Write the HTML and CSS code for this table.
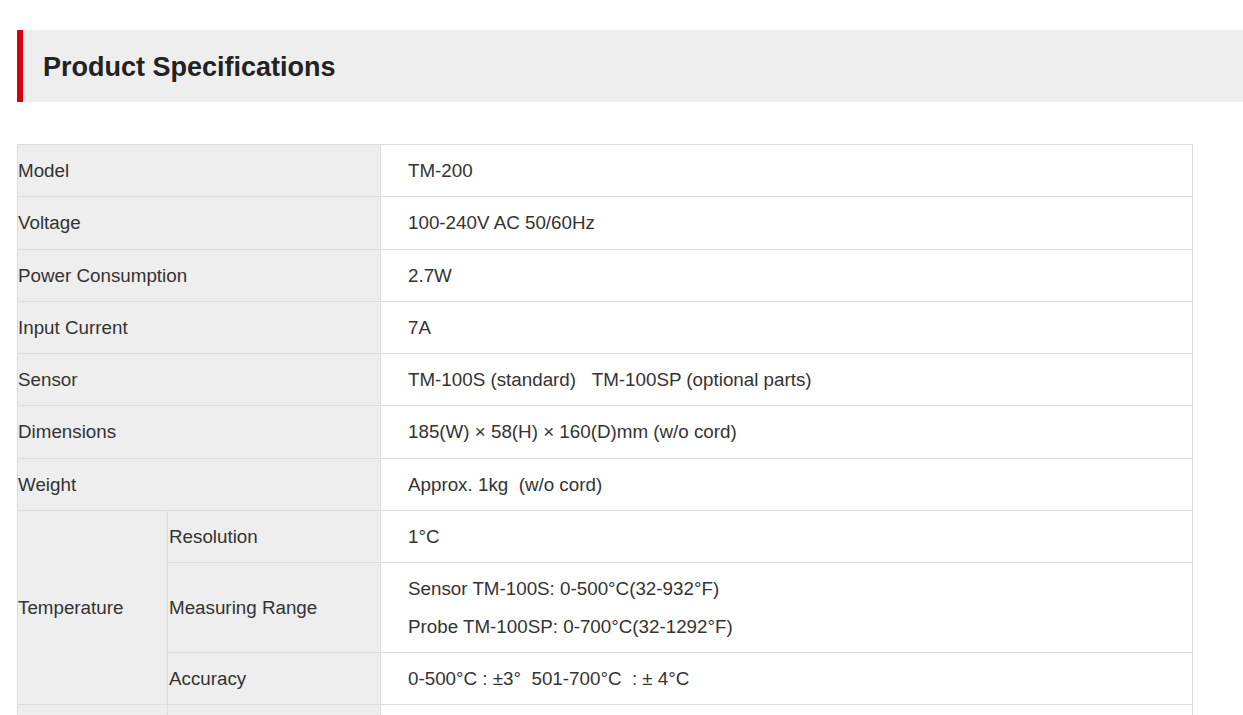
FILE: index.html
```html
<!DOCTYPE html>
<html lang="en">
<head>
<meta charset="utf-8">
<title>Product Specifications</title>
<link rel="stylesheet" href="styles.css">
</head>
<body>
<section class="spec">
  <h2 class="spec-title">Product Specifications</h2>
  <table class="spec-table">
    <colgroup>
      <col class="c1">
      <col class="c2">
      <col class="c3">
    </colgroup>
    <tbody>
      <tr><th colspan="2">Model</th><td>TM-200</td></tr>
      <tr><th colspan="2">Voltage</th><td>100-240V AC 50/60Hz</td></tr>
      <tr><th colspan="2">Power Consumption</th><td>2.7W</td></tr>
      <tr><th colspan="2">Input Current</th><td>7A</td></tr>
      <tr><th colspan="2">Sensor</th><td>TM-100S (standard)&nbsp;&nbsp;&nbsp;TM-100SP (optional parts)</td></tr>
      <tr><th colspan="2">Dimensions</th><td>185(W) × 58(H) × 160(D)mm (w/o cord)</td></tr>
      <tr><th colspan="2">Weight</th><td>Approx. 1kg&nbsp;&nbsp;(w/o cord)</td></tr>
      <tr><th rowspan="3">Temperature</th><th class="sub">Resolution</th><td>1°C</td></tr>
      <tr><th class="sub">Measuring Range</th><td>Sensor TM-100S: 0-500°C(32-932°F)<br>Probe TM-100SP: 0-700°C(32-1292°F)</td></tr>
      <tr><th class="sub">Accuracy</th><td>0-500°C : ±3°&nbsp;&nbsp;501-700°C&nbsp;&nbsp;: ± 4°C</td></tr>
      <tr><th rowspan="2">Timer</th><th class="sub">Setting Range</th><td>1-99 min</td></tr>
      <tr><th class="sub">Accuracy</th><td>±1 min</td></tr>
    </tbody>
  </table>
</section>
</body>
</html>
```

FILE: styles.css
```css
html, body {
  margin: 0;
  padding: 0;
  background: #fff;
}

body {
  font-family: "Liberation Sans", Arial, sans-serif;
  color: #333;
}

.spec {
  padding: 30px 0 40px 17px;
}

.spec-title {
  margin: 0 0 42px 0;
  height: 72px;
  box-sizing: border-box;
  display: flex;
  align-items: center;
  padding-left: 20px;
  padding-top: 2px;
  background: #eeeeee;
  border-left: 6px solid #d7000f;
  font-size: 27px;
  font-weight: bold;
  color: #222;
}

.spec-table {
  width: 1176px;
  border-collapse: collapse;
  table-layout: fixed;
  font-size: 18.8px;
  line-height: 37.3px;
}

.c1 { width: 150px; }
.c2 { width: 213px; }

.spec-table th,
.spec-table td {
  border: 1px solid #dcdcdc;
  padding: 7px 0;
  text-align: left;
  vertical-align: middle;
  font-weight: normal;
}

.spec-table th {
  background: #eeeeee;
  padding-left: 0;
}

.spec-table th.sub {
  padding-left: 1px;
}

.spec-table td {
  padding-left: 27px;
  color: #333;
}
```
